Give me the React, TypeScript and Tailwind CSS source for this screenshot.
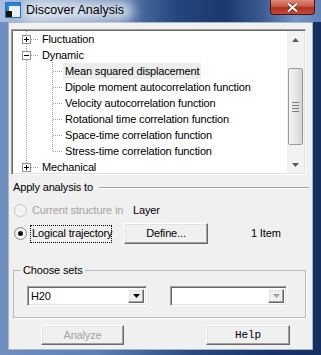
import React from "react";

const sunken =
  "border border-t-[#a0a0a0] border-l-[#a0a0a0] border-r-white border-b-white shadow-[inset_1px_1px_0_#696969,inset_-1px_-1px_0_#e3e3e3]";
const raised =
  "border border-t-white border-l-white border-r-[#696969] border-b-[#696969] shadow-[inset_-1px_-1px_0_#a0a0a0,inset_1px_1px_0_#e3e3e3]";

const treeRows = [
  { label: "Fluctuation", level: 0 },
  { label: "Dynamic", level: 0 },
  { label: "Mean squared displacement", level: 1, selected: true },
  { label: "Dipole moment autocorrelation function", level: 1 },
  { label: "Velocity autocorrelation function", level: 1 },
  { label: "Rotational time correlation function", level: 1 },
  { label: "Space-time correlation function", level: 1 },
  { label: "Stress-time correlation function", level: 1 },
  { label: "Mechanical", level: 0 },
];

const AppIcon = () => (
  <svg width="16" height="16" viewBox="0 0 16 16" shapeRendering="crispEdges">
    <rect x="0.5" y="0.5" width="15" height="15" fill="#ffffff" stroke="#1f6fc4" />
    <rect x="1" y="1" width="14" height="3" fill="#2a7fd6" />
    <rect x="1" y="1" width="3" height="14" fill="#2a7fd6" />
    <rect x="1" y="9" width="6" height="6" fill="#111" />
    <rect x="7" y="4" width="8" height="11" fill="#e8f1fb" />
  </svg>
);

const Expander = ({ y, open }: { y: number; open?: boolean }) => (
  <g>
    <rect x="9.5" y={y - 3.5} width="8" height="8" fill="#fff" stroke="#919191" />
    <line x1="11" x2="16" y1={y + 0.5} y2={y + 0.5} stroke="#000" />
    {!open && <line x1="13.5" x2="13.5" y1={y - 2} y2={y + 3} stroke="#000" />}
  </g>
);

const TreeLines = () => {
  const dot = { stroke: "#a0a0a0", strokeDasharray: "1 1" };
  return (
    <svg
      className="absolute left-0 top-0"
      width="60"
      height="142"
      shapeRendering="crispEdges"
    >
      <line x1="13.5" x2="13.5" y1="0" y2="4" {...dot} />
      <line x1="13.5" x2="13.5" y1="13" y2="20" {...dot} />
      <line x1="13.5" x2="13.5" y1="29" y2="132" {...dot} />
      {[8, 24, 136].map((y) => (
        <line key={y} x1="18" x2="26" y1={y + 0.5} y2={y + 0.5} {...dot} />
      ))}
      <line x1="39.5" x2="39.5" y1="31" y2="120" {...dot} />
      {[40, 56, 72, 88, 104, 120].map((y) => (
        <line key={y} x1="40" x2="50" y1={y + 0.5} y2={y + 0.5} {...dot} />
      ))}
      <Expander y={8} />
      <Expander y={24} open />
      <Expander y={136} />
    </svg>
  );
};

const ScrollBar = () => (
  <div className="flex h-full w-[17px] shrink-0 flex-col items-center bg-[#f2f2f2]">
    <div className="flex h-[17px] w-full items-center justify-center">
      <svg width="7" height="4" viewBox="0 0 7 4">
        <path d="M0 4 L3.5 0 L7 4 Z" fill="#5a5a5a" />
      </svg>
    </div>
    <div className="h-[20px]" />
    <div className="flex h-[77px] w-[15px] flex-col items-center justify-center gap-[2px] rounded-[2px] border border-[#9a9a9a] bg-[linear-gradient(90deg,#f4f4f4,#e6e6e6_50%,#d4d4d4)]">
      {[0, 1, 2, 3].map((i) => (
        <div key={i} className="h-px w-[7px] bg-[#7d7d7d]" />
      ))}
    </div>
    <div className="flex-1" />
    <div className="flex h-[17px] w-full items-center justify-center">
      <svg width="7" height="4" viewBox="0 0 7 4">
        <path d="M0 0 L7 0 L3.5 4 Z" fill="#5a5a5a" />
      </svg>
    </div>
  </div>
);

const Radio = ({ checked, disabled }: { checked?: boolean; disabled?: boolean }) => (
  <div
    className={`flex h-[13px] w-[13px] shrink-0 items-center justify-center rounded-full border ${
      disabled
        ? "border-[#c5c5c5] bg-[#f4f4f4]"
        : "border-[#8a8a8a] bg-[radial-gradient(circle_at_60%_70%,#ffffff,#e2e2e2)]"
    }`}
  >
    {checked && <div className="h-[5px] w-[5px] rounded-full bg-[#111]" />}
  </div>
);

const Combo = ({ value, width, disabled }: { value?: string; width: string; disabled?: boolean }) => (
  <div className={`flex h-[20px] items-stretch bg-white p-[2px] ${sunken} ${width}`}>
    <div className="flex flex-1 items-center pl-[1px] text-[11px] text-black">{value}</div>
    <div className={`flex w-[16px] items-center justify-center bg-[#f0f0f0] ${raised}`}>
      <svg width="7" height="4" viewBox="0 0 7 4">
        <path d="M0 0 L7 0 L3.5 4 Z" fill={disabled ? "#a0a0a0" : "#000"} />
      </svg>
    </div>
  </div>
);

export default function App() {
  return (
    <div className="flex h-[355px] w-[321px] flex-col overflow-hidden bg-[linear-gradient(90deg,#6f8fbf_0%,#5c7fb4_30%,#2a4a80_60%,#17336a_85%,#15305f_100%)] font-['Liberation_Sans',sans-serif]">
      {/* title bar */}
      <div className="relative flex h-[22px] shrink-0 items-center bg-[linear-gradient(90deg,#a9bedb_0%,#8fa8cb_18%,#5a7aad_38%,#25467d_55%,#1a386e_70%,#3b5d94_82%,#7394c4_92%,#5e81b6_100%)]">
        <div className="absolute left-[22px] top-[1px] h-[20px] w-[112px] rounded-full bg-white/70 blur-[6px]" />
        <div className="relative ml-[5px] mt-[-2px]">
          <AppIcon />
        </div>
        <span className="relative ml-[5px] mt-[-2px] text-[12.5px] text-black">Discover Analysis</span>
        <div className="absolute right-[6px] top-0 flex h-[15px] w-[45px] items-center justify-center rounded-b-[4px] border border-t-0 border-[#4a1414] bg-[linear-gradient(180deg,#e08a7c_0%,#c85a48_45%,#b0301e_55%,#c54a34_100%)]">
          <svg width="11" height="9" viewBox="0 0 11 9">
            <path d="M1 0.5 L10 8.5 M10 0.5 L1 8.5" stroke="#5a2020" strokeWidth="3.2" />
            <path d="M1 0.5 L10 8.5 M10 0.5 L1 8.5" stroke="#ffffff" strokeWidth="2" />
          </svg>
        </div>
      </div>

      {/* client */}
      <div className="mx-[8px] h-[328px] w-[305px] whitespace-nowrap border border-[#a9b6c9] bg-[#f0f0f0] text-[11px] tracking-[-0.15px] text-black">
        {/* tree view */}
        <div className={`ml-[2px] mt-[6px] flex h-[146px] w-[295px] bg-white p-[1px] ${sunken}`}>
          <div className="relative flex-1 overflow-hidden">
            <TreeLines />
            <div className="flex flex-col">
              {treeRows.map((r) => (
                <div
                  key={r.label}
                  className={`flex h-[16px] items-center ${r.level ? "pl-[50px]" : "pl-[27px]"}`}
                >
                  <span className={`flex h-[16px] items-center px-[2px] ${r.selected ? "bg-[#ececec]" : ""}`}>
                    {r.label}
                  </span>
                </div>
              ))}
            </div>
          </div>
          <ScrollBar />
        </div>

        {/* apply analysis to */}
        <div className="ml-[4px] mt-[6px] flex h-[13px] items-center">
          <span>Apply analysis to</span>
          <div className="ml-[6px] mr-[3px] h-[2px] flex-1 border-t border-b border-t-[#a0a0a0] border-b-white" />
        </div>

        <div className="ml-[5px] mt-[8px] flex h-[16px] items-center">
          <Radio disabled />
          <span className="ml-[5px] w-[101px] text-[#a3a3a3]">Current structure in</span>
          <span>Layer</span>
        </div>

        <div className="ml-[5px] mt-[4px] flex h-[23px] items-center">
          <Radio checked />
          <span className="ml-[3px] flex h-[18px] w-[82px] shrink-0 items-center border border-dotted border-black px-[1px]">
            Logical trajectory
          </span>
          <button className={`ml-[12px] flex h-[21px] w-[84px] items-center justify-center bg-[#f0f0f0] text-[11px] ${raised}`}>
            Define...
          </button>
          <span className="ml-[43px]">1 Item</span>
        </div>

        {/* choose sets */}
        <div className="relative ml-[4px] mt-[25px] h-[48px] w-[293px] border border-[#b8b8b8] shadow-[1px_1px_0_#ffffff]">
          <span className="absolute left-[7px] top-[-8px] bg-[#f0f0f0] px-[2px] leading-[14px]">Choose sets</span>
          <div className="ml-[13px] mt-[15px] flex gap-[23px]">
            <Combo value="H20" width="w-[120px]" />
            <Combo width="w-[117px]" disabled />
          </div>
        </div>

        {/* buttons */}
        <div className="mt-[7px] flex">
          <button className={`ml-[32px] flex h-[20px] w-[83px] items-center justify-center bg-[#f0f0f0] text-[11px] text-[#a3a3a3] ${raised}`}>
            Analyze
          </button>
          <button className={`ml-[82px] flex h-[20px] w-[84px] items-center justify-center bg-[#f0f0f0] font-['Liberation_Mono',monospace] text-[11px] text-black ${raised}`}>
            Help
          </button>
        </div>
      </div>
    </div>
  );
}
